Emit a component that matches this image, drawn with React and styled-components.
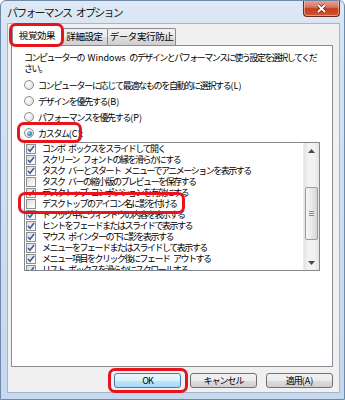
import React from 'react';
import styled, { createGlobalStyle } from 'styled-components';

const GlobalStyle = createGlobalStyle`
  html, body {
    margin: 0;
    padding: 0;
    background: #fff;
  }
  body {
    font-family: "Noto Sans CJK JP", "Noto Sans", sans-serif;
    color: #000;
  }
`;

const Window = styled.div`
  position: relative;
  width: 345px;
  height: 400px;
  box-sizing: border-box;
  display: flex;
  flex-direction: column;
  padding: 0 4px 6px 6px;
  background: linear-gradient(to bottom, #dfe9f5 0, #d6e3f2 40px, #c6d8ee 100%);
  border: 1px solid #6f89aa;
  border-radius: 6px 6px 0 0;
  overflow: hidden;
`;

const TitleBar = styled.div`
  height: 22px;
  display: flex;
  align-items: flex-start;
  justify-content: space-between;
  flex-shrink: 0;
`;

const Title = styled.div`
  font-size: 11px;
  letter-spacing: -1.8px;
  word-spacing: 4px;
  line-height: 22px;
  color: #1a1a1a;
  white-space: nowrap;
`;

const CloseButton = styled.div`
  width: 37px;
  height: 17px;
  margin-top: -1px;
  box-sizing: border-box;
  border: 1px solid #6b2a1d;
  border-top: none;
  border-radius: 0 0 4px 4px;
  background: linear-gradient(to bottom, #e9a99a 0, #d9735d 45%, #c43c1f 55%, #d2562f 100%);
  box-shadow: inset 0 0 0 1px rgba(255, 220, 210, 0.5);
  display: flex;
  align-items: center;
  justify-content: center;
`;

const Client = styled.div`
  flex: 1;
  display: flex;
  flex-direction: column;
  background: #f0f0f0;
  border: 1px solid #a4b6cc;
  padding: 1px 6px 0 3px;
`;

const TabStrip = styled.div`
  display: flex;
  align-items: flex-end;
  height: 20px;
  padding-left: 1px;
`;

const Tab = styled.div`
  position: relative;
  box-sizing: border-box;
  width: ${({ $w }) => $w}px;
  height: ${({ $active }) => ($active ? 21 : 17)}px;
  margin-bottom: ${({ $active }) => ($active ? -1 : 0)}px;
  margin-left: ${({ $first }) => ($first ? 0 : -1)}px;
  z-index: ${({ $active }) => ($active ? 2 : 1)};
  border: 1px solid #898c95;
  border-bottom: none;
  border-radius: 2px 2px 0 0;
  background: ${({ $active }) =>
    $active
      ? '#fff'
      : 'linear-gradient(to bottom, #f2f2f2 0, #ebebeb 50%, #dddddd 51%, #cfcfcf 100%)'};
  font-size: 9.5px;
  letter-spacing: -0.4px;
  line-height: ${({ $active }) => ($active ? 19 : 15)}px;
  text-align: center;
  white-space: nowrap;
`;

const Panel = styled.div`
  position: relative;
  z-index: 1;
  width: 322px;
  height: 322px;
  box-sizing: border-box;
  border: 1px solid #898c95;
  background: #fff;
  padding: 6px 0 0 12px;
  display: flex;
  flex-direction: column;
`;

const Intro = styled.div`
  font-size: 9px;
  letter-spacing: -1.5px;
  word-spacing: 3px;
  line-height: 11px;
  white-space: nowrap;
`;

const Latin = styled.span`
  letter-spacing: 0;
`;

const RadioGroup = styled.div`
  margin-top: 3px;
  display: flex;
  flex-direction: column;
`;

const RadioRow = styled.div`
  height: 16px;
  display: flex;
  align-items: center;
  gap: 4px;
  font-size: 9px;
  letter-spacing: -1.3px;
  white-space: nowrap;
`;

const RadioCircle = styled.span`
  width: 10px;
  height: 10px;
  box-sizing: border-box;
  border-radius: 50%;
  border: 1px solid #8e8f8f;
  background: radial-gradient(circle at 35% 35%, #ffffff 0, #e6e6e6 60%, #cfcfcf 100%);
  display: flex;
  align-items: center;
  justify-content: center;

  &::after {
    content: '';
    display: ${({ $on }) => ($on ? 'block' : 'none')};
    width: 5px;
    height: 5px;
    border-radius: 50%;
    background: radial-gradient(circle at 35% 35%, #a9dcf6 0, #3d8fd1 55%, #1d5a9c 100%);
  }
`;

const ListBox = styled.div`
  margin-top: 1px;
  width: 296px;
  height: 129px;
  box-sizing: border-box;
  border: 1px solid #828790;
  display: flex;
  overflow: hidden;
`;

const Items = styled.div`
  flex: 1;
  overflow: hidden;
  padding-left: 1px;
`;

const Item = styled.div`
  height: 11px;
  display: flex;
  align-items: center;
  gap: 6px;
  font-size: 9px;
  letter-spacing: -1.5px;
  word-spacing: 3px;
  line-height: 11px;
  white-space: nowrap;
`;

const CheckBox = styled.span`
  flex-shrink: 0;
  width: 10px;
  height: 10px;
  box-sizing: border-box;
  border: 1px solid #8e8f8f;
  background: linear-gradient(135deg, #dcdcdc 0, #f2f2f2 60%, #ffffff 100%);
  display: flex;
  align-items: center;
  justify-content: center;
`;

const ScrollBar = styled.div`
  width: 15px;
  display: flex;
  flex-direction: column;
  background: linear-gradient(to right, #e3e3e3 0, #f2f2f2 30%, #f2f2f2 70%, #e3e3e3 100%);
  border-left: 1px solid #eaeaea;
`;

const ArrowButton = styled.div`
  height: 15px;
  display: flex;
  align-items: center;
  justify-content: center;
  flex-shrink: 0;
`;

const Track = styled.div`
  flex: 1;
  padding: 29px 1px 0;
`;

const Thumb = styled.div`
  height: 53px;
  box-sizing: border-box;
  border: 1px solid #9b9b9b;
  border-radius: 2px;
  background: linear-gradient(to right, #f5f5f5 0, #e9e9e9 50%, #d6d6d6 100%);
  display: flex;
  align-items: center;
  justify-content: center;
`;

const Grip = styled.div`
  width: 5px;
  height: 5px;
  background: repeating-linear-gradient(to bottom, #8a8a8a 0, #8a8a8a 1px, transparent 1px, transparent 2px);
`;

const ButtonRow = styled.div`
  display: flex;
  justify-content: flex-end;
  gap: 9px;
  margin-top: 6px;
`;

const Button = styled.div`
  width: 67px;
  height: 15px;
  box-sizing: border-box;
  border: 1px solid ${({ $primary }) => ($primary ? '#3c7fb1' : '#707070')};
  border-radius: 3px;
  background: ${({ $primary }) =>
    $primary
      ? 'linear-gradient(to bottom, #eaf6fd 0, #d9f0fc 50%, #bee6fd 51%, #a7d9f5 100%)'
      : 'linear-gradient(to bottom, #f2f2f2 0, #ebebeb 50%, #dddddd 51%, #cfcfcf 100%)'};
  font-size: 9px;
  letter-spacing: -1px;
  line-height: 13px;
  text-align: center;
  white-space: nowrap;
`;

const Callout = styled.div`
  position: absolute;
  left: ${({ $x }) => $x - 1}px;
  top: ${({ $y }) => $y - 1}px;
  width: ${({ $w }) => $w}px;
  height: ${({ $h }) => $h}px;
  box-sizing: border-box;
  border: 3px solid #e6141c;
  border-radius: 7px;
  z-index: 10;
  pointer-events: none;
`;

const options = [
  ['コンボ ボックスをスライドして開く', true],
  ['スクリーン フォントの縁を滑らかにする', true],
  ['タスク バーとスタート メニューでアニメーションを表示する', true],
  ['タスク バーの縮小版のプレビューを保存する', false],
  ['デスクトップ コンポジションを有効にする', true],
  ['デスクトップのアイコン名に影を付ける', false],
  ['ドラッグ中にウィンドウの内容を表示する', true],
  ['ヒントをフェードまたはスライドで表示する', true],
  ['マウス ポインターの下に影を表示する', true],
  ['メニューをフェードまたはスライドして表示する', true],
  ['メニュー項目をクリック後にフェード アウトする', true],
  ['リスト ボックスを滑らかにスクロールする', true],
];

const radios = [
  ['コンピューターに応じて最適なものを自動的に選択する', '(L)', false],
  ['デザインを優先する', '(B)', false],
  ['パフォーマンスを優先する', '(P)', false],
  ['カスタム', '(C):', true],
];

const Check = () => (
  <svg width="8" height="8" viewBox="0 0 8 8">
    <path d="M1 4 L3 6.2 L7 1" fill="none" stroke="#3f5aa6" strokeWidth="1.6" />
  </svg>
);

const App = () => {
  return (
    <>
      <GlobalStyle />
      <Window>
        <TitleBar>
          <Title>パフォーマンス オプション</Title>
          <CloseButton>
            <svg width="11" height="9" viewBox="0 0 11 9">
              <path d="M2 1 L9 8 M9 1 L2 8" stroke="#5a2318" strokeWidth="3.2" />
              <path d="M2 1 L9 8 M9 1 L2 8" stroke="#fff" strokeWidth="1.8" />
            </svg>
          </CloseButton>
        </TitleBar>

        <Client>
          <TabStrip>
            <Tab $w={50} $active $first>視覚効果</Tab>
            <Tab $w={47}>詳細設定</Tab>
            <Tab $w={69}>データ実行防止</Tab>
          </TabStrip>

          <Panel>
            <Intro>
              コンピューターの <Latin>Windows</Latin> のデザインとパフォーマンスに使う設定を選択してくだ
              <br />
              さい。
            </Intro>

            <RadioGroup>
              {radios.map(([label, key, on]) => (
                <RadioRow key={label}>
                  <RadioCircle $on={on} />
                  <span>
                    {label}
                    <Latin>{key}</Latin>
                  </span>
                </RadioRow>
              ))}
            </RadioGroup>

            <ListBox>
              <Items>
                {options.map(([label, on]) => (
                  <Item key={label}>
                    <CheckBox>{on && <Check />}</CheckBox>
                    {label}
                  </Item>
                ))}
              </Items>
              <ScrollBar>
                <ArrowButton>
                  <svg width="7" height="4" viewBox="0 0 7 4">
                    <path d="M0 4 L3.5 0 L7 4 Z" fill="#4a4a4a" />
                  </svg>
                </ArrowButton>
                <Track>
                  <Thumb>
                    <Grip />
                  </Thumb>
                </Track>
                <ArrowButton>
                  <svg width="7" height="4" viewBox="0 0 7 4">
                    <path d="M0 0 L3.5 4 L7 0 Z" fill="#4a4a4a" />
                  </svg>
                </ArrowButton>
              </ScrollBar>
            </ListBox>
          </Panel>

          <ButtonRow>
            <Button $primary>OK</Button>
            <Button>キャンセル</Button>
            <Button>
              適用<Latin>(A)</Latin>
            </Button>
          </ButtonRow>
        </Client>

        <Callout $x={9} $y={23} $w={55} $h={24} />
        <Callout $x={17} $y={122} $w={65} $h={21} />
        <Callout $x={18} $y={192} $w={167} $h={22} />
        <Callout $x={108} $y={368} $w={80} $h={25} />
      </Window>
    </>
  );
};

export default App;
